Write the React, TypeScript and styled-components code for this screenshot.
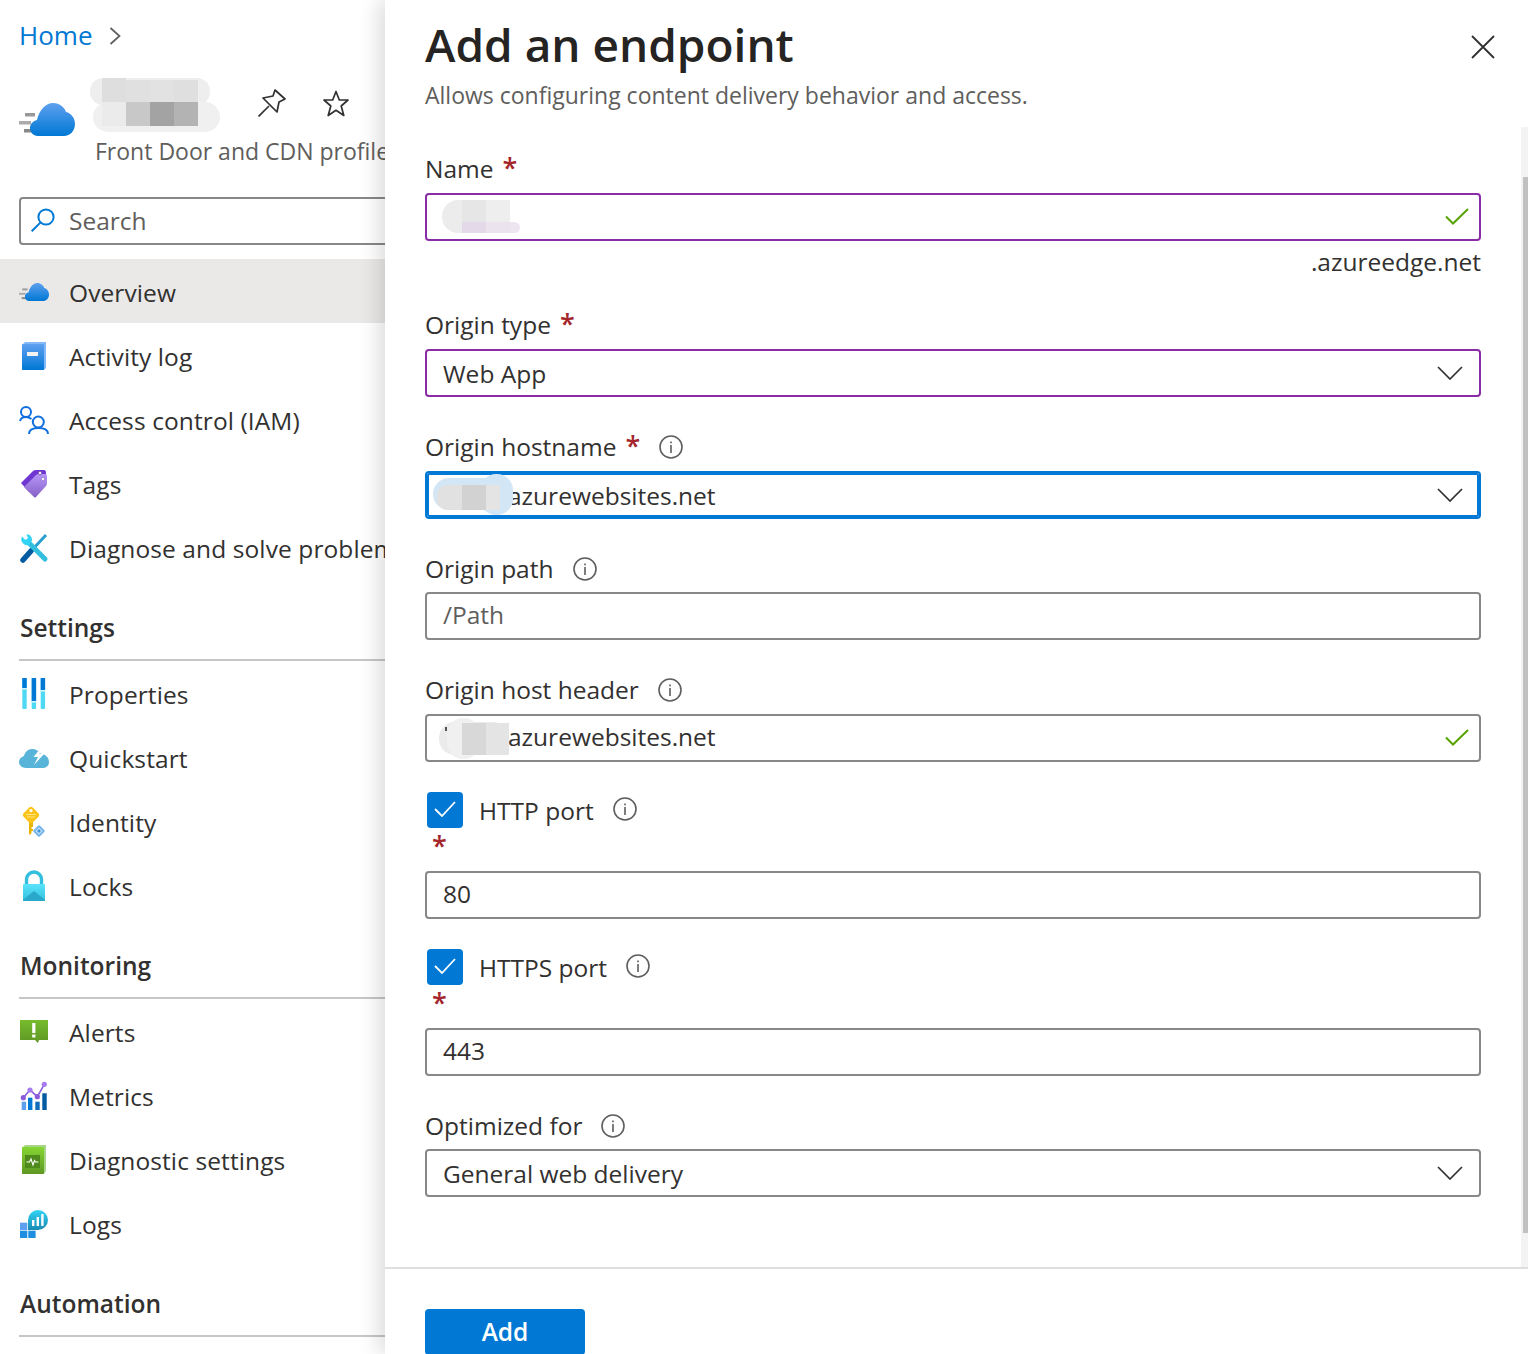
import React from 'react';
import styled, { createGlobalStyle } from 'styled-components';

const GlobalStyle = createGlobalStyle`
  html, body {
    margin: 0;
    height: 1354px;
    overflow: hidden;
    background: #fff;
  }
  * { box-sizing: border-box; }
`;

const Page = styled.div`
  display: flex;
  width: 1528px;
  height: 1354px;
  overflow: hidden;
  font-family: "Open Sans", "Noto Sans", sans-serif;
  font-size: 24.5px;
  color: #323130;
`;

const Sidebar = styled.aside`
  width: 385px;
  flex: none;
  overflow: hidden;
  white-space: nowrap;
`;

const Breadcrumb = styled.nav`
  display: flex;
  align-items: center;
  height: 72px;
  padding: 0 0 2px 19px;
  gap: 17px;
  color: #0078d4;
  font-size: 26px;

  svg {
    margin-top: 2px;
  }
`;

const ResourceHeader = styled.header`
  display: flex;
  padding: 6px 0 0 19px;
  height: 125px;
`;

const ResourceIcon = styled.svg`
  width: 56px;
  height: 33px;
  margin: 25px 20px 0 0;
  flex: none;
`;

const ResourceTop = styled.div`
  display: flex;
  height: 58px;
`;

const ResourceName = styled.div`
  position: relative;
  width: 163px;
  flex: none;
`;

const PinIcon = styled.svg`
  width: 28px;
  height: 28px;
  margin-top: 11px;
  flex: none;
`;

const StarIcon = styled.svg`
  width: 26px;
  height: 27px;
  margin: 12px 0 0 37px;
  flex: none;
`;

const ResourceType = styled.div`
  font-size: 23px;
  line-height: 30px;
  color: #605e5c;
`;

const SearchBox = styled.div`
  display: flex;
  align-items: center;
  gap: 14px;
  width: 400px;
  height: 48px;
  margin-left: 19px;
  padding: 0 0 2px 10px;
  border: 2px solid #8a8886;
  border-radius: 4px;
  color: #605e5c;
`;

const Menu = styled.div`
  margin-top: 14px;
`;

const MenuItem = styled.div<{ $active?: boolean }>`
  display: flex;
  align-items: center;
  gap: 20px;
  height: 64px;
  padding: 2px 0 0 19px;
  letter-spacing: 0.1px;
  background: ${(props) => (props.$active ? '#ebe9e7' : 'transparent')};
`;

const MenuIcon = styled.svg`
  width: 30px;
  height: 30px;
  flex: none;
  overflow: visible;
  margin-top: -2px;
`;

const SectionTitle = styled.div`
  height: 82px;
  margin-left: 19px;
  padding: 32px 0 0 1px;
  line-height: 34px;
  font-weight: 600;
  border-bottom: 2px solid #c8c6c4;
`;

const Blade = styled.main`
  position: relative;
  z-index: 1;
  flex: 1;
  display: flex;
  flex-direction: column;
  background: #fff;
  box-shadow: -6px 0 20px rgba(0, 0, 0, 0.14);
`;

const BladeHeader = styled.header`
  display: flex;
  justify-content: space-between;
  height: 127px;
  padding: 12px 33px 0 40px;
`;

const Title = styled.h1`
  margin: 0 0 2px;
  font-size: 46px;
  line-height: 64px;
  font-weight: 600;
  color: #252423;
`;

const Subtitle = styled.p`
  margin: 0;
  font-size: 23px;
  line-height: 34px;
  color: #605e5c;
`;

const CloseIcon = styled.svg`
  width: 24px;
  height: 24px;
  margin-top: 23px;
`;

const BladeBody = styled.div`
  display: flex;
  height: 1140px;
  padding-left: 40px;
`;

const Form = styled.form`
  flex: 1;
  margin-right: 40px;
  padding-top: 26px;
`;

const Track = styled.div`
  width: 7px;
  flex: none;
  padding: 50px 0 0 2px;
  background: #f3f3f3;
`;

const Thumb = styled.div`
  height: 1056px;
  background: #c1c1c1;
`;

const Field = styled.div<{ $top?: number }>`
  margin-top: ${(props) => props.$top ?? 0}px;
`;

const Label = styled.label<{ $tight?: boolean }>`
  display: flex;
  align-items: center;
  height: 32px;
  padding-bottom: 2px;
  margin-bottom: ${(props) => (props.$tight ? 7 : 8)}px;

  svg {
    margin-top: 2px;
  }
`;

const Required = styled.span`
  color: #a4262c;
  font-size: 27px;
  font-weight: 600;
  line-height: 32px;
  margin-left: 9px;
`;

const InfoIcon = styled.svg`
  width: 24px;
  height: 24px;
  margin-left: 19px;
  flex: none;
`;

const InputBox = styled.div<{ $tone?: 'plain' | 'purple' | 'focus' }>`
  position: relative;
  display: flex;
  align-items: center;
  justify-content: space-between;
  height: 48px;
  padding: 0 16px;
  border-radius: 4px;
  border: 2px solid ${(props) => ({ plain: '#8a8886', purple: '#8a2da5', focus: '#0078d4' }[props.$tone ?? 'plain'])};
  box-shadow: ${(props) => (props.$tone === 'focus' ? 'inset 0 0 0 2px #0078d4' : 'none')};
`;

const InputText = styled.span<{ $muted?: boolean }>`
  margin-top: -3px;
  color: ${(props) => (props.$muted ? '#605e5c' : 'inherit')};
`;

const HiddenPrefix = styled.span`
  display: inline-block;
  width: 65px;
`;

const ChevronIcon = styled.svg`
  width: 26px;
  height: 14px;
  flex: none;
`;

const CheckIcon = styled.svg`
  width: 24px;
  height: 17px;
  flex: none;
  margin: -1px -6px 0 0;
`;

const Suffix = styled.div`
  text-align: right;
  height: 37px;
  line-height: 42px;
`;

const CheckRow = styled.div`
  display: flex;
  align-items: center;
  height: 36px;
  margin-left: 2px;

  svg:last-child {
    margin-top: -2px;
  }
`;

const CheckBox = styled.span`
  display: flex;
  align-items: center;
  justify-content: center;
  width: 36px;
  height: 36px;
  margin-right: 16px;
  border-radius: 4px;
  background: #0078d4;
`;

const PortStar = styled.div`
  height: 43px;
  line-height: 32px;
  margin-left: 7px;
  padding-top: 2px;
  color: #a4262c;
  font-size: 27px;
  font-weight: 600;
`;

const BladeFooter = styled.footer`
  flex: 1;
  padding: 40px 0 0 40px;
  border-top: 2px solid #e1dfdd;
  overflow: hidden;
`;

const AddButton = styled.button`
  display: block;
  width: 160px;
  height: 46px;
  padding: 0 0 2px;
  border: 0;
  border-radius: 4px;
  background: #0078d4;
  color: #fff;
  font: 600 24.5px "Open Sans", "Noto Sans", sans-serif;
`;

// blurred patches that hide names in the original, they sit over the text
const Patch = styled.span<{ $l: number; $t: number; $w: number; $h: number; $c: string; $r?: number }>`
  position: absolute;
  left: ${(props) => props.$l}px;
  top: ${(props) => props.$t}px;
  width: ${(props) => props.$w}px;
  height: ${(props) => props.$h}px;
  background: ${(props) => props.$c};
  border-radius: ${(props) => props.$r ?? 0}px;
`;

type PatchData = [number, number, number, number, string, number?];

const Patches: React.FC<{ items: PatchData[] }> = ({ items }) => (
  <>
    {items.map(([l, t, w, h, c, r]) => (
      <Patch key={`${l}-${t}-${w}`} $l={l} $t={t} $w={w} $h={h} $c={c} $r={r} />
    ))}
  </>
);

const namePatches: PatchData[] = [
  [-5, 0, 120, 27, '#eeeeee', 13],
  [-2, 24, 127, 30, '#f0f0f0', 15],
  [7, 0, 24, 24, '#dedede'],
  [31, 2, 24, 22, '#e0e0e0'],
  [55, 2, 24, 22, '#e2e2e2'],
  [79, 2, 24, 22, '#dfdfdf'],
  [7, 24, 24, 24, '#ebebeb'],
  [31, 24, 24, 24, '#c8c8c8'],
  [55, 24, 24, 24, '#a3a3a3'],
  [79, 24, 24, 24, '#b3b3b3'],
];

const endpointPatches: PatchData[] = [
  [15, 5, 68, 33, '#ececec', 16],
  [35, 27, 58, 11, '#ede5f0', 6],
  [35, 5, 24, 22, '#e6e6e6'],
  [59, 5, 24, 22, '#eeeeee'],
  [35, 27, 24, 11, '#e3d9e8'],
  [59, 27, 24, 11, '#ebe3ee'],
];

const hostnamePatches: PatchData[] = [
  [6, 5, 67, 32, '#d3e6f6', 16],
  [53, 1, 33, 41, '#d3e6f6', 16],
  [10, 12, 63, 25, '#e1e1e1', 10],
  [35, 12, 24, 25, '#d2d2d2'],
  [59, 12, 14, 25, '#e4e4e4'],
];

const hostHeaderPatches: PatchData[] = [
  [12, 6, 70, 33, '#ebebeb', 16],
  [20, 2, 33, 41, '#f0f0f0', 16],
  [35, 7, 24, 32, '#d8d8d8'],
  [59, 7, 23, 32, '#e4e4e4'],
  [18, 11, 2, 4, '#555555'],
];

const FrontDoorArt: React.FC<{ id: string }> = ({ id }) => (
  <>
    <defs>
      <linearGradient id={id} x1="0" y1="0" x2="0" y2="1">
        <stop offset="0" stopColor="#5ea0ef" />
        <stop offset="1" stopColor="#0078d4" />
      </linearGradient>
    </defs>
    <rect x="6" y="10" width="10" height="3.5" fill="#999" />
    <rect x="0" y="18" width="12" height="3.5" fill="#aaa" />
    <rect x="5" y="26" width="10" height="3.5" fill="#888" />
    <path d="M19 33C14 33 11 29 11 25C11 21 14 18 18 17C20 7 27 0 34 0C41 0 46 5 47 9C52 10 56 15 56 21C56 28 51 33 45 33Z" fill={`url(#${id})`} />
  </>
);

const OverviewIcon = () => (
  <MenuIcon viewBox="0 0 30 30">
    <g transform="translate(0 7) scale(0.536 0.545)">
      <FrontDoorArt id="overview-cloud" />
    </g>
  </MenuIcon>
);

const ActivityIcon = () => (
  <MenuIcon viewBox="0 0 30 30">
    <defs>
      <linearGradient id="book-blue" x1="0" y1="0" x2="0" y2="1">
        <stop offset="0" stopColor="#5ea0ef" />
        <stop offset="1" stopColor="#0078d4" />
      </linearGradient>
    </defs>
    <path d="M3 5L6 2H27V28L25 30H3Z" fill="#83b9f9" />
    <rect x="3" y="4" width="22" height="26" rx="1" fill="url(#book-blue)" />
    <rect x="8" y="12" width="11" height="4" fill="#f2f2f2" />
  </MenuIcon>
);

const PeopleIcon = () => (
  <MenuIcon viewBox="0 0 30 30">
    <g fill="none" stroke="#0f6fde" strokeWidth="2">
      <circle cx="7" cy="8" r="5" />
      <circle cx="19.3" cy="18" r="5.5" />
      <path d="M1 17C2 13 5 13 7 13C9 13 11 14 12.5 15" />
      <path d="M10 30C10 26 14 24 19.5 24C25 24 29 26 29 30" />
    </g>
  </MenuIcon>
);

const TagIcon = () => (
  <MenuIcon viewBox="0 0 30 30">
    <defs>
      <linearGradient id="tag-purple" x1="0" y1="0" x2="0" y2="1">
        <stop offset="0" stopColor="#b796f9" />
        <stop offset="1" stopColor="#8661c5" />
      </linearGradient>
    </defs>
    <path d="M2 15L14 3Q15 2 17 2H25Q27 2 27 5V8L10 24Z" fill="#6f36d2" />
    <path d="M5 19L17 7Q18 6 20 6H26Q28 6 28 8V15Q28 17 27 18L17 29Q16 30 15 29Z" fill="url(#tag-purple)" />
    <circle cx="21" cy="5" r="1.8" fill="#f4efff" stroke="#5c2d91" strokeWidth="0.6" />
    <circle cx="24" cy="11" r="1.8" fill="#f4efff" stroke="#8661c5" strokeWidth="0.6" />
  </MenuIcon>
);

const ToolsIcon = () => (
  <MenuIcon viewBox="0 0 30 30">
    <path d="M13 18L27 3" stroke="#2a9fd0" strokeWidth="3" fill="none" />
    <path d="M4 28L12 19" stroke="#005ba1" strokeWidth="5.5" strokeLinecap="round" fill="none" />
    <path d="M10 11L26 27" stroke="#32bedd" strokeWidth="5" strokeLinecap="round" fill="none" />
    <path d="M3 4.5A6 6 0 0 0 10 13L13 8.5A6 6 0 0 0 9.5 2.5L7.5 2.5L9 6L6.5 8Z" fill="#32d4f5" />
  </MenuIcon>
);

const PropertiesIcon = () => (
  <MenuIcon viewBox="0 0 30 30">
    <rect x="3.3" y="0" width="4.4" height="31" rx="1" fill="#50d9f5" />
    <rect x="12.7" y="0" width="4.4" height="31" rx="1" fill="#50d9f5" />
    <rect x="21.7" y="0" width="4.4" height="31" rx="1" fill="#50d9f5" />
    <rect x="3.3" y="0" width="4.4" height="10" fill="#0078d4" />
    <rect x="3.3" y="10" width="4.4" height="1.5" fill="#d6f5fc" />
    <rect x="12.7" y="0" width="4.4" height="23" fill="#0078d4" />
    <rect x="12.7" y="23" width="4.4" height="1.5" fill="#d6f5fc" />
    <rect x="21.7" y="0" width="4.4" height="12" fill="#0078d4" />
    <rect x="21.7" y="12" width="4.4" height="1.5" fill="#d6f5fc" />
  </MenuIcon>
);

const QuickstartIcon = () => (
  <MenuIcon viewBox="0 0 30 30">
    <path d="M7 26C3 26 0 23 0 20C0 17 2 15 5 14C6 10 9 7 13 7C17 7 20 9 22 12C26 12 30 15 30 20C30 24 27 26 23 26Z" fill="#59b4d9" />
    <path d="M23 4.5L14.5 15H19L15 23L25 12H20.5Z" fill="#fff" />
  </MenuIcon>
);

const IdentityIcon = () => (
  <MenuIcon viewBox="0 0 30 30">
    <path d="M10 14H14V21H12.5V23H14V25H12.5V27L11 29L10 28Z" fill="#e8b400" />
    <rect x="5.5" y="2.5" width="13" height="13" rx="2.5" transform="rotate(45 12 9)" fill="#fcc419" />
    <circle cx="12" cy="4.6" r="1.6" fill="#fff" />
    <rect x="7" y="8" width="10" height="1" fill="#fde58a" />
    <rect x="8" y="10.5" width="8" height="1" fill="#fde58a" />
    <rect x="15.5" y="20.5" width="9" height="9" rx="1.5" transform="rotate(45 20 25)" fill="#76b6ec" />
    <path d="M20 21.5L23.5 25L20 28.5L16.5 25Z" fill="#c8e3f8" />
    <path d="M20 23L22 25L20 27L18 25Z" fill="#3c91d8" />
  </MenuIcon>
);

const LockIcon = () => (
  <MenuIcon viewBox="0 0 30 30">
    <defs>
      <linearGradient id="lock-cyan" x1="0" y1="0" x2="0" y2="1">
        <stop offset="0" stopColor="#5ae4fb" />
        <stop offset="1" stopColor="#32bedd" />
      </linearGradient>
    </defs>
    <path d="M7.5 15V9.5A7.5 7.5 0 0 1 22.5 9.5V15" fill="none" stroke="#32bedd" strokeWidth="3.4" />
    <rect x="4" y="14" width="22" height="17" rx="1" fill="url(#lock-cyan)" />
    <path d="M4 30L15 21L26 30V31H4Z" fill="#2aa8cc" />
  </MenuIcon>
);

const AlertIcon = () => (
  <MenuIcon viewBox="0 0 30 30">
    <defs>
      <linearGradient id="alert-green" x1="0" y1="0" x2="0" y2="1">
        <stop offset="0" stopColor="#76bc2d" />
        <stop offset="1" stopColor="#5e9624" />
      </linearGradient>
    </defs>
    <path d="M1 4H29V24H20L19 27L16 24H1Z" fill="url(#alert-green)" />
    <rect x="13.2" y="7" width="3.2" height="10" fill="#fff" />
    <rect x="13.2" y="18.5" width="3.2" height="3" fill="#fff" />
  </MenuIcon>
);

const MetricsIcon = () => (
  <MenuIcon viewBox="0 0 30 30">
    <rect x="2.7" y="21.7" width="4.4" height="8.3" fill="#5ea0ef" />
    <rect x="9" y="17.7" width="4.4" height="12.3" fill="#0078d4" />
    <rect x="16.3" y="21.7" width="4.4" height="8.3" fill="#0f6cbd" />
    <rect x="23.3" y="13.3" width="4.4" height="16.7" fill="#005ba1" />
    <path d="M4.3 17.7L11 10L18.3 16.7L25.3 4.3" fill="none" stroke="#8c5cdb" strokeWidth="1.6" />
    <circle cx="4.3" cy="17.7" r="2.6" fill="#8c5cdb" />
    <circle cx="11" cy="10" r="2.6" fill="#a67af0" />
    <circle cx="18.3" cy="16.7" r="2.6" fill="#8c5cdb" />
    <circle cx="25.3" cy="4.3" r="2.6" fill="#a67af0" />
  </MenuIcon>
);

const DiagnosticIcon = () => (
  <MenuIcon viewBox="0 0 30 30">
    <defs>
      <linearGradient id="book-green" x1="0" y1="0" x2="0" y2="1">
        <stop offset="0" stopColor="#86d633" />
        <stop offset="1" stopColor="#5e9624" />
      </linearGradient>
    </defs>
    <path d="M3 4L6 1H27V27L25 30H3Z" fill="#a7d58a" />
    <rect x="3" y="3" width="22" height="27" rx="1" fill="url(#book-green)" />
    <rect x="6" y="11" width="15" height="13" fill="#4e8a1c" />
    <path d="M7.5 18H10.5L12 15L14 21L15.5 16.5L16.5 18H19.5" fill="none" stroke="#fff" strokeWidth="1.1" />
  </MenuIcon>
);

const LogsIcon = () => (
  <MenuIcon viewBox="0 0 30 30">
    <defs>
      <linearGradient id="logs-cyan" x1="0" y1="0" x2="0" y2="1">
        <stop offset="0" stopColor="#32d4f5" />
        <stop offset="1" stopColor="#198ab3" />
      </linearGradient>
    </defs>
    <rect x="1" y="14.7" width="7.3" height="7.3" fill="#5ea0ef" />
    <rect x="1" y="22.7" width="7.3" height="7.3" fill="#1c8fe0" />
    <rect x="9.3" y="22.7" width="7.3" height="7.3" fill="#1c8fe0" />
    <path d="M9 22V12A10 10 0 1 1 19 22Z" fill="url(#logs-cyan)" />
    <rect x="13" y="12" width="2.4" height="6" fill="#fff" />
    <rect x="17.6" y="9" width="2.4" height="9" fill="#fff" />
    <rect x="22.2" y="6" width="2.4" height="12" fill="#fff" />
  </MenuIcon>
);

const Info = () => (
  <InfoIcon viewBox="0 0 24 24">
    <circle cx="12" cy="12" r="11" fill="none" stroke="#605e5c" strokeWidth="1.6" />
    <rect x="11.2" y="10" width="1.6" height="8" fill="#605e5c" />
    <rect x="11.2" y="6.5" width="1.6" height="1.8" fill="#605e5c" />
  </InfoIcon>
);

const Chevron = () => (
  <ChevronIcon viewBox="0 0 26 14">
    <path d="M1 1L13 13L25 1" fill="none" stroke="#323130" strokeWidth="1.7" />
  </ChevronIcon>
);

const Check = () => (
  <CheckIcon viewBox="0 0 24 17">
    <path d="M1 8.5L8 15.5L23 1" fill="none" stroke="#57a300" strokeWidth="2" />
  </CheckIcon>
);

const TickBox = () => (
  <CheckBox>
    <svg width="22" height="16" viewBox="0 0 22 16">
      <path d="M1 8L8 15L21 1" fill="none" stroke="#fff" strokeWidth="1.8" />
    </svg>
  </CheckBox>
);

interface NavEntry {
  label: string,
  icon: React.ReactNode,
  active?: boolean,
}

const mainItems: NavEntry[] = [
  { label: 'Overview', icon: <OverviewIcon />, active: true },
  { label: 'Activity log', icon: <ActivityIcon /> },
  { label: 'Access control (IAM)', icon: <PeopleIcon /> },
  { label: 'Tags', icon: <TagIcon /> },
  { label: 'Diagnose and solve problems', icon: <ToolsIcon /> },
];

const settingsItems: NavEntry[] = [
  { label: 'Properties', icon: <PropertiesIcon /> },
  { label: 'Quickstart', icon: <QuickstartIcon /> },
  { label: 'Identity', icon: <IdentityIcon /> },
  { label: 'Locks', icon: <LockIcon /> },
];

const monitoringItems: NavEntry[] = [
  { label: 'Alerts', icon: <AlertIcon /> },
  { label: 'Metrics', icon: <MetricsIcon /> },
  { label: 'Diagnostic settings', icon: <DiagnosticIcon /> },
  { label: 'Logs', icon: <LogsIcon /> },
];

const renderItems = (items: NavEntry[]) => items.map((item) => (
  <MenuItem key={item.label} $active={item.active}>
    {item.icon}
    {item.label}
  </MenuItem>
));

export default function App() {
  return (
    <Page>
      <GlobalStyle />
      <Sidebar>
        <Breadcrumb>
          Home
          <svg width="12" height="18" viewBox="0 0 12 18">
            <path d="M1.5 1L10.5 9L1.5 17" fill="none" stroke="#605e5c" strokeWidth="1.7" />
          </svg>
        </Breadcrumb>
        <ResourceHeader>
          <ResourceIcon viewBox="0 0 56 33">
            <FrontDoorArt id="resource-cloud" />
          </ResourceIcon>
          <div>
            <ResourceTop>
              <ResourceName>
                <Patches items={namePatches} />
              </ResourceName>
              <PinIcon viewBox="0 0 28 28">
                <path d="M17 1L27 10L21 13L19 23L5 9L15 7Z" fill="none" stroke="#323130" strokeWidth="1.7" strokeLinejoin="round" />
                <path d="M0.5 27.5L11 17" fill="none" stroke="#323130" strokeWidth="1.7" />
              </PinIcon>
              <StarIcon viewBox="0 0 26 27">
                <path d="M13 1.5L16.3 10H25L18.2 16L20.8 25.5L13 20.3L5.2 25.5L7.8 16L1 10H9.7Z" fill="none" stroke="#323130" strokeWidth="1.7" strokeLinejoin="round" />
              </StarIcon>
            </ResourceTop>
            <ResourceType>Front Door and CDN profile</ResourceType>
          </div>
        </ResourceHeader>
        <SearchBox>
          <svg width="24" height="24" viewBox="0 0 24 24">
            <circle cx="15" cy="9" r="7.6" fill="none" stroke="#0078d4" strokeWidth="2" />
            <path d="M0.7 23.3L9.6 14.4" stroke="#0078d4" strokeWidth="2" />
          </svg>
          Search
        </SearchBox>
        <Menu>{renderItems(mainItems)}</Menu>
        <SectionTitle>Settings</SectionTitle>
        {renderItems(settingsItems)}
        <SectionTitle>Monitoring</SectionTitle>
        {renderItems(monitoringItems)}
        <SectionTitle>Automation</SectionTitle>
      </Sidebar>
      <Blade>
        <BladeHeader>
          <div>
            <Title>Add an endpoint</Title>
            <Subtitle>Allows configuring content delivery behavior and access.</Subtitle>
          </div>
          <CloseIcon viewBox="0 0 24 24">
            <path d="M1 1L23 23M23 1L1 23" fill="none" stroke="#323130" strokeWidth="1.8" />
          </CloseIcon>
        </BladeHeader>
        <BladeBody>
          <Form>
            <Field>
              <Label>Name<Required>*</Required></Label>
              <InputBox $tone="purple">
                <Patches items={endpointPatches} />
                <span />
                <Check />
              </InputBox>
              <Suffix>.azureedge.net</Suffix>
            </Field>
            <Field $top={31}>
              <Label>Origin type<Required>*</Required></Label>
              <InputBox $tone="purple">
                Web App
                <Chevron />
              </InputBox>
            </Field>
            <Field $top={34}>
              <Label>Origin hostname<Required>*</Required><Info /></Label>
              <InputBox $tone="focus">
                <span><HiddenPrefix />azurewebsites.net</span>
                <Patches items={hostnamePatches} />
                <Chevron />
              </InputBox>
            </Field>
            <Field $top={34}>
              <Label $tight>Origin path<Info /></Label>
              <InputBox>
                <InputText $muted>/Path</InputText>
              </InputBox>
            </Field>
            <Field $top={34}>
              <Label>Origin host header<Info /></Label>
              <InputBox>
                <InputText><HiddenPrefix />azurewebsites.net</InputText>
                <Patches items={hostHeaderPatches} />
                <Check />
              </InputBox>
            </Field>
            <Field $top={30}>
              <CheckRow>
                <TickBox />
                HTTP port
                <Info />
              </CheckRow>
              <PortStar>*</PortStar>
              <InputBox><InputText>80</InputText></InputBox>
            </Field>
            <Field $top={30}>
              <CheckRow>
                <TickBox />
                HTTPS port
                <Info />
              </CheckRow>
              <PortStar>*</PortStar>
              <InputBox><InputText>443</InputText></InputBox>
            </Field>
            <Field $top={34}>
              <Label $tight>Optimized for<Info /></Label>
              <InputBox>
                General web delivery
                <Chevron />
              </InputBox>
            </Field>
          </Form>
          <Track>
            <Thumb />
          </Track>
        </BladeBody>
        <BladeFooter>
          <AddButton type="button">Add</AddButton>
        </BladeFooter>
      </Blade>
    </Page>
  );
}
